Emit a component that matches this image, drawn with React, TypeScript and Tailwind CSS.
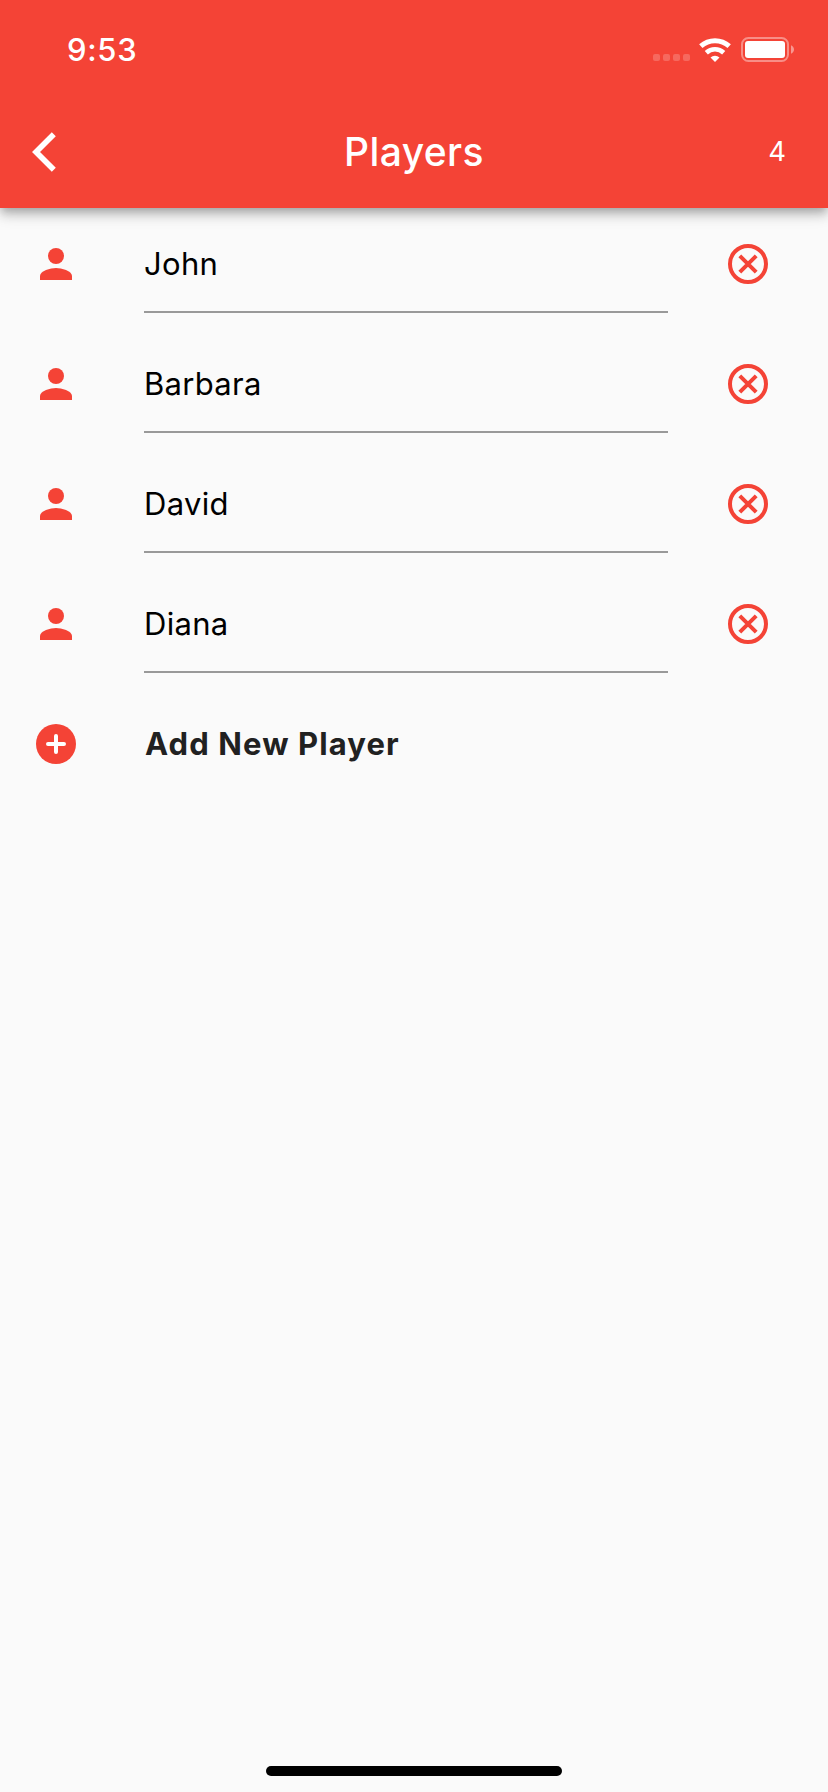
import React, { useState } from 'react';

interface Player {
  id: number;
  name: string;
}

const initialPlayers: Player[] = [
  { id: 1, name: 'John' },
  { id: 2, name: 'Barbara' },
  { id: 3, name: 'David' },
  { id: 4, name: 'Diana' },
];

function BackIcon() {
  return (
    <svg viewBox="0 0 24 24" className="size-12" fill="currentColor">
      <path d="m11.9 4.1-2-2L0 12l9.9 9.9 2-2L4 12z" />
    </svg>
  );
}

function PersonIcon() {
  return (
    <svg viewBox="0 0 24 24" className="size-12 shrink-0" fill="currentColor">
      <circle cx="12" cy="8" r="4" />
      <path d="M12 14c-2.67 0-8 1.34-8 4v2h16v-2c0-2.66-5.33-4-8-4z" />
    </svg>
  );
}

function RemoveIcon() {
  return (
    <svg viewBox="0 0 48 48" className="size-12" fill="none" stroke="currentColor" strokeWidth="4">
      <circle cx="24" cy="24" r="18" />
      <path d="m15.8 15.8 16.4 16.4M32.2 15.8 15.8 32.2" />
    </svg>
  );
}

function AddIcon() {
  return (
    <svg viewBox="0 0 48 48" className="size-12 shrink-0">
      <circle cx="24" cy="24" r="20" fill="currentColor" />
      <path d="M24 16v16M16 24h16" stroke="#fff" strokeWidth="4" strokeLinecap="round" />
    </svg>
  );
}

function WifiIcon() {
  return (
    <svg viewBox="0 0 32 24" className="h-6 w-8" fill="none" stroke="currentColor">
      <path d="M1.8 8.2a21.2 21.2 0 0 1 28.4 0" strokeWidth="5" />
      <path d="M7.3 14.7a12.75 12.75 0 0 1 17.4 0" strokeWidth="4.6" />
      <path d="M16 24l-4.5-4.6a6.7 6.7 0 0 1 9 0z" fill="currentColor" stroke="none" />
    </svg>
  );
}

function BatteryIcon() {
  return (
    <svg viewBox="0 0 53 25" className="h-[25px] w-[53px]">
      <rect x="1" y="1" width="46" height="23" rx="6.4" fill="none" stroke="#fff" strokeOpacity=".4" strokeWidth="2" />
      <rect x="4" y="4" width="40" height="17" rx="3" fill="#fff" />
      <path d="M50 8.2c1.8.8 3 2.4 3 4.3s-1.2 3.5-3 4.3z" fill="#fff" fillOpacity=".45" />
    </svg>
  );
}

function StatusBar() {
  return (
    <div className="flex h-24 items-center justify-between pt-[3px] pr-[34px] pl-[67px]">
      <span className="text-[31px] leading-none font-[550] tracking-[0.7px]">9:53</span>
      <div className="flex items-center">
        <div className="mt-4 flex gap-[3px]">
          {[0, 1, 2, 3].map((dot) => (
            <span key={dot} className="size-[7px] rounded-[2px] bg-white/20" />
          ))}
        </div>
        <div className="ml-[9px]">
          <WifiIcon />
        </div>
        <div className="ml-[10px]">
          <BatteryIcon />
        </div>
      </div>
    </div>
  );
}

export default function App() {
  const [players, setPlayers] = useState(initialPlayers);

  const removePlayer = (id: number) => setPlayers(players.filter((p) => p.id !== id));

  return (
    <div className="flex h-[1792px] w-[828px] flex-col overflow-hidden bg-[#fafafa] font-['Inter',sans-serif]">
      <header className="h-[208px] shrink-0 bg-[#f44336] text-white shadow-[0_4px_8px_-2px_rgba(0,0,0,0.2),0_8px_10px_0_rgba(0,0,0,0.14),0_2px_20px_0_rgba(0,0,0,0.12)]">
        <StatusBar />
        <div className="grid h-28 grid-cols-[1fr_auto_1fr] items-center px-8">
          <button>
            <BackIcon />
          </button>
          <h1 className="pb-[2px] text-[39px] leading-none font-[550] tracking-[0.4px]">Players</h1>
          <span className="pr-[10px] text-right text-[27.5px] leading-none">{players.length}</span>
        </div>
      </header>

      <main className="flex flex-1 flex-col gap-2">
        {players.map((player) => (
          <div key={player.id} className="flex h-28 items-center pr-14 pl-8 text-[#f44336]">
            <PersonIcon />
            <div className="mb-[7px] ml-16 flex h-[98px] w-[524px] items-center self-end border-b-2 border-[#999] text-[31px] leading-none tracking-[0.3px] text-black">
              {player.name}
            </div>
            <button className="ml-auto" onClick={() => removePlayer(player.id)}>
              <RemoveIcon />
            </button>
          </div>
        ))}
        <div className="flex h-28 items-center pl-8 text-[#f44336]">
          <AddIcon />
          <span className="ml-16 pb-[2px] pl-px text-[31px] leading-none font-[650] tracking-[1.1px] text-[#212121]">
            Add New Player
          </span>
        </div>
      </main>

      {/* Home indicator */}
      <div className="mb-4 h-[10px] w-[296px] self-center rounded-full bg-black" />
    </div>
  );
}
